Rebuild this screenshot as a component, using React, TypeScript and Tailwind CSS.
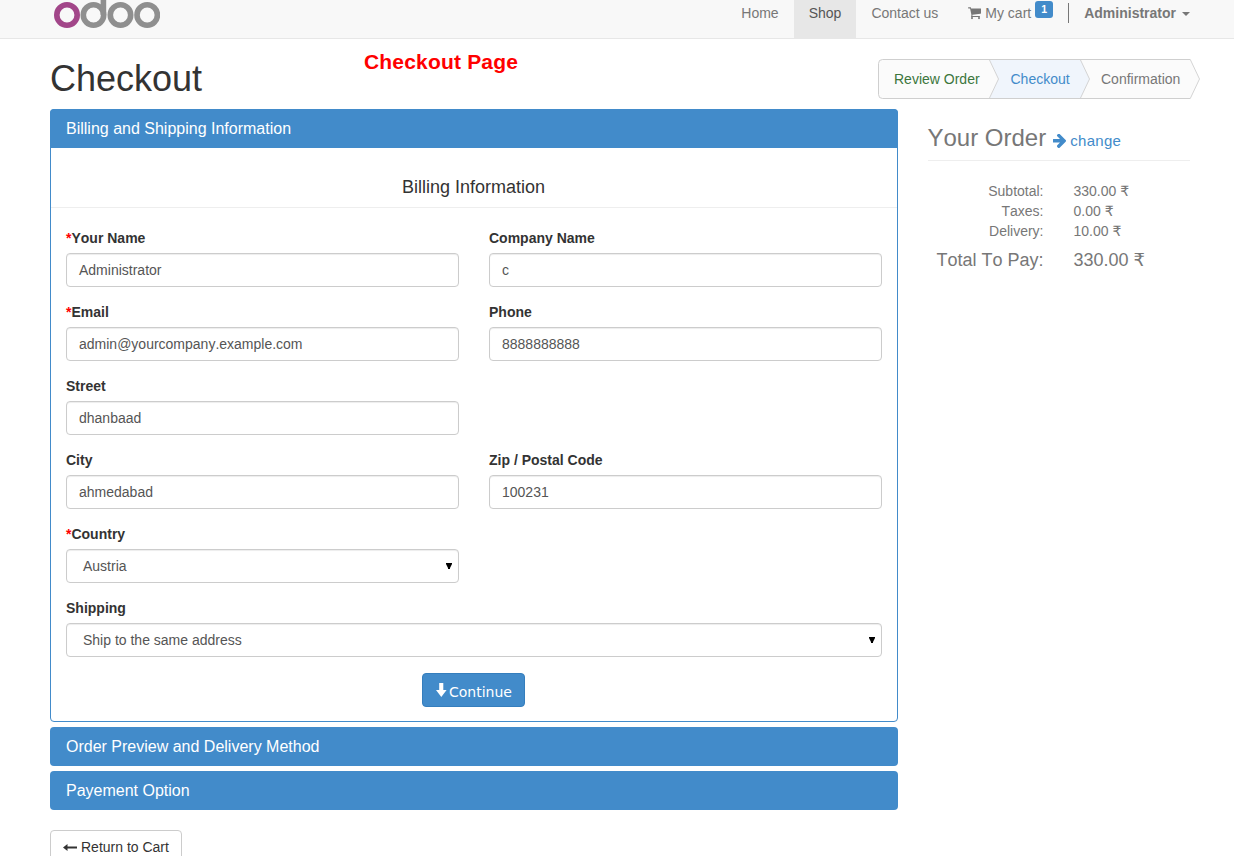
import type { ReactNode } from "react";

function CartIcon() {
  return (
    <svg className="h-[14px] w-[13px] fill-current" viewBox="0 100 1664 1664" preserveAspectRatio="none">
      <path d="M640 1536q0 52-38 90t-90 38-90-38-38-90 38-90 90-38 90 38 38 90zm896 0q0 52-38 90t-90 38-90-38-38-90 38-90 90-38 90 38 38 90zm128-1088v512q0 24-16.5 42.5t-40.5 21.5l-1044 122q13 60 13 70 0 16-24 64h920q26 0 45 19t19 45-19 45-45 19h-1024q-26 0-45-19t-19-45q0-11 8-31.5t16-36 21.5-40 15.5-29.5l-177-823h-204q-26 0-45-19t-19-45 19-45 45-19h256q16 0 28.5 6.5t19.5 15.5 13 24.5 8 26 5.5 29.5 4.5 26h1201q26 0 45 19t19 45z" />
    </svg>
  );
}

function ArrowRightIcon() {
  return (
    <svg className="h-[14px] w-[13px] fill-current" viewBox="64 220 1408 1520" preserveAspectRatio="none">
      <path d="M1472 960q0 54-37 91l-651 651q-39 37-91 37-51 0-90-37l-75-75q-38-38-38-91t38-91l293-293h-704q-52 0-84.5-37.5t-32.5-90.5v-128q0-53 32.5-90.5t84.5-37.5h704l-293-294q-38-36-38-90t38-90l75-75q38-38 90-38 53 0 91 38l651 651q37 35 37 90z" />
    </svg>
  );
}

function Logo() {
  return (
    <svg className="block h-[29px] w-[110px]" viewBox="0 0 110 29" fill="none" strokeWidth="5.6">
      <circle cx="17" cy="15" r="10.2" stroke="#a24689" />
      <g stroke="#8f8f8f">
        <circle cx="43.5" cy="15" r="10.2" />
        <path d="M53.4 0V15" />
        <circle cx="70.5" cy="15" r="10.2" />
        <circle cx="97.2" cy="15" r="10.2" />
      </g>
    </svg>
  );
}

function Field({
  label,
  value,
  required = false,
  select = false,
  className = "",
}: {
  label: string;
  value: string;
  required?: boolean;
  select?: boolean;
  className?: string;
}) {
  return (
    <div className={className}>
      <div className="mb-[5px] h-5 font-bold leading-5">
        {required && <span className="text-[#ff0000]">*</span>}
        {label}
      </div>
      <div
        className={`flex h-[34px] items-center justify-between rounded border border-[#ccc] text-[#555] shadow-[inset_0_1px_1px_rgba(0,0,0,0.075)] ${
          select ? "pl-4 pr-[6px]" : "px-3"
        }`}
      >
        <span>{value}</span>
        {select && (
          <svg className="mb-px h-[6px] w-[6px]" viewBox="0 0 6 6">
            <path d="M0 0H6V1L4 5V6H2V5L0 1Z" fill="#000" />
          </svg>
        )}
      </div>
    </div>
  );
}

function PanelHeading({ children, className }: { children: ReactNode; className: string }) {
  return (
    <div className={`flex h-[39px] items-center bg-[#428bca] px-4 text-base leading-5 text-white ${className}`}>
      {children}
    </div>
  );
}

function Wizard() {
  return (
    <div className="relative h-10 w-[322px]">
      <svg className="absolute inset-0 h-10 w-[322px]" viewBox="0 0 322 40">
        <path d="M4.5 40.2H312" stroke="#eee" />
        <path d="M312.5.5H4.5a4 4 0 0 0-4 4v31a4 4 0 0 0 4 4H312.5L321.5 20Z" fill="#fbfbfb" />
        <path d="M111.5.5H202.5L211.5 20 202.5 39.5H111.5L120.5 20Z" fill="#f0f5fc" />
        <path d="M312.5.5H4.5a4 4 0 0 0-4 4v31a4 4 0 0 0 4 4H312.5" fill="none" stroke="#cfcfcf" />
        <path d="M111.5 1L120.5 20 111.5 39M202.5 1L211.5 20 202.5 39M312.5 1L321.5 20 312.5 39" fill="none" stroke="#d4d4d4" />
      </svg>
      <div className="relative flex h-10 items-center pl-4">
        <span className="w-[116.5px] text-[#3c763d]">Review Order</span>
        <span className="w-[90.5px] text-[#428bca]">Checkout</span>
        <span className="text-[#777]">Confirmation</span>
      </div>
    </div>
  );
}

const totals = [
  ["Subtotal:", "330.00 ₹"],
  ["Taxes:", "0.00 ₹"],
  ["Delivery:", "10.00 ₹"],
];

export default function App() {
  return (
    <div className="h-[856px] w-full overflow-hidden bg-white font-['Liberation_Sans','DejaVu_Sans',sans-serif] text-sm leading-5 text-[#333] [font-kerning:none]">
      <header className="flex h-[39px] justify-between border-b border-[#e7e7e7] bg-[#f8f8f8] pl-[50px] pr-11 text-[#777]">
        <Logo />
        <nav className="flex h-[38px] pt-[3px]">
          <span className="px-[15px]">Home</span>
          <span className="-mt-[3px] bg-[#e7e7e7] px-[15px] pt-[3px] text-[#555]">Shop</span>
          <span className="px-[15px]">Contact us</span>
          <span className="flex px-[15px]">
            <span className="mr-[4px] mt-[3px]">
              <CartIcon />
            </span>
            My cart
            <span className="-mt-[2px] ml-1 flex h-[17px] w-[18px] items-center justify-center rounded-[3px] bg-[#428bca] text-[10.5px] font-bold leading-none text-white">
              1
            </span>
          </span>
          <span className="h-5 w-px bg-[#777]" />
          <span className="flex pl-[15px] font-bold">
            Administrator
            <span className="ml-[6px] mt-[9px] h-0 w-0 border-x-4 border-t-4 border-x-transparent border-t-[#777]" />
          </span>
        </nav>
      </header>

      <div className="flex h-[70px] w-[1200px] justify-between pl-[50px]">
        <div className="flex">
          <h1 className="w-[314px] pt-5 text-[36px] leading-10">Checkout</h1>
          <div className="pt-[10px] text-[21px] font-bold leading-[26px] tracking-[0.18px] text-[#ff0000]">Checkout Page</div>
        </div>
        <div className="pt-5">
          <Wizard />
        </div>
      </div>

      <main className="flex gap-[29.5px] pl-[50px]">
        <div className="w-[848px]">
          <section className="h-[613px] rounded border border-[#428bca]">
            <PanelHeading className="-mx-px -mt-px rounded-t">Billing and Shipping Information</PanelHeading>
            <h4 className="flex h-[60px] items-end justify-center border-b border-[#eee] pb-[10px] pr-px text-lg leading-5">
              Billing Information
            </h4>
            <div className="grid grid-cols-2 gap-x-[30px] gap-y-[15px] px-[15px] pt-5">
              <Field label="Your Name" value="Administrator" required />
              <Field label="Company Name" value="c" />
              <Field label="Email" value="admin@yourcompany.example.com" required />
              <Field label="Phone" value="8888888888" />
              <Field label="Street" value="dhanbaad" />
              <span />
              <Field label="City" value="ahmedabad" />
              <Field label="Zip / Postal Code" value="100231" />
              <Field label="Country" value="Austria" required select />
              <span />
              <Field label="Shipping" value="Ship to the same address" select className="col-span-2" />
            </div>
            <div className="flex justify-center pr-px pt-4">
              <button className="flex h-[34px] w-[103px] items-center rounded border border-[#357ebd] bg-[#428bca] pl-[13px] font-['DejaVu_Sans',sans-serif] text-sm leading-5 text-white">
                <svg className="mb-px mr-[2px] h-[14px] w-[11px] fill-current" viewBox="0 0 11 14">
                  <path d="M3.2 0H7.3V7H10.6L5.3 14 0 7H3.2Z" />
                </svg>
                <span className="pt-[3px]">Continue</span>
              </button>
            </div>
          </section>
          <PanelHeading className="mt-[5px] rounded">Order Preview and Delivery Method</PanelHeading>
          <PanelHeading className="mt-[5px] rounded">Payement Option</PanelHeading>
          <button className="mt-5 flex h-[34px] w-[132px] items-center rounded border border-[#ccc] bg-white pl-3">
            <svg className="mr-1 h-[7px] w-[14px]" viewBox="0 0 14 7" fill="#333">
              <path d="M0 3.5L4.5 0V2.5H14V4.5H4.5V7Z" />
            </svg>
            Return to Cart
          </button>
        </div>

        <aside className="w-[262.5px] text-[#777]">
          <div className="flex h-[52px] border-b border-[#eee] pt-[15px]">
            <span className="text-2xl leading-7">Your Order</span>
            <span className="flex h-5 items-center pl-[7px] pt-[14px] text-[15px] leading-5 tracking-[0.3px] text-[#428bca]">
              <span className="mr-1">
                <ArrowRightIcon />
              </span>
              change
            </span>
          </div>
          <div className="pt-5">
            {totals.map(([label, value]) => (
              <div key={label} className="flex h-5">
                <span className="w-[116px] text-right">{label}</span>
                <span className="pl-[30px]">{value}</span>
              </div>
            ))}
            <div className="flex pt-[9px] text-lg leading-5">
              <span className="w-[116px] text-right">Total To Pay:</span>
              <span className="pl-[30px]">{"330.00 ₹"}</span>
            </div>
          </div>
        </aside>
      </main>
    </div>
  );
}
